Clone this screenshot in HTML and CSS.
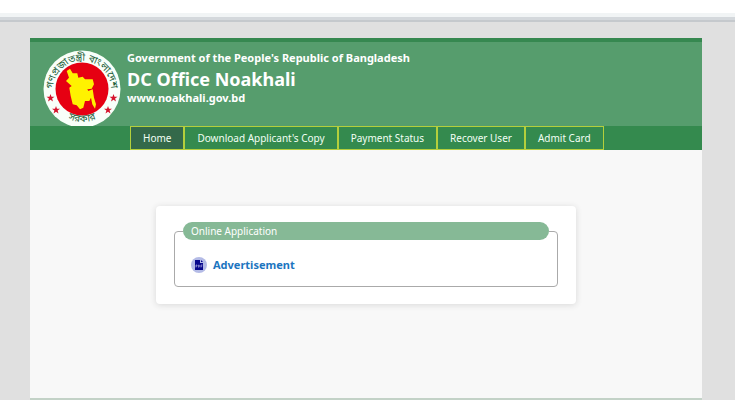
FILE: index.html
```html
<!DOCTYPE html>
<html lang="en">
<head>
<meta charset="utf-8">
<title>DC Office Noakhali</title>
<link rel="stylesheet" href="styles.css">
</head>
<body>
<div class="topbar"></div>
<div class="page">
  <header class="header">
    <svg class="seal" viewBox="0 0 78 78" aria-hidden="true">
      <defs>
        <path id="arc-top" d="M11.500 49A29 29 0 1 1 66.500 49"/>
        <path id="arc-bottom" d="M15 62A34 34 0 0 0 63 62"/>
        <path id="star" d="M0-4L1-1.300 4-1.300 1.600.6 2.500 3.500 0 1.800-2.500 3.500-1.600.6-4-1.300-1-1.300z"/>
      </defs>
      <circle cx="39" cy="39" r="38.500" fill="#f8fff9"/>
      <circle cx="39" cy="39" r="26.500" fill="#e60012"/>
      <path fill="#fff200" d="M23.700 21L27 18.700 29.700 23.300 34.300 23.300 35.300 27.700 39.700 26.700 42 29.300 49.700 29.300 51 34.300 48.700 38.700 44.300 39.300 45.300 41 49.700 39.300 51 47.700 53 54.300 52 58.700 49.300 54.300 48 47.700 46.300 51 42 51 40.300 57.700 37 59.300 33.700 55.300 29.700 54.300 27.700 46 26.300 37.700 28.700 36 23 31 26 27.700z"/>
      <g fill="#d5142c">
        <use href="#star" x="7.500" y="48"/>
        <use href="#star" x="13" y="60"/>
        <use href="#star" x="70.500" y="48"/>
        <use href="#star" x="65" y="60"/>
      </g>
      <text class="seal-text"><textPath href="#arc-top" startOffset="50%" text-anchor="middle">গণপ্রজাতন্ত্রী বাংলাদেশ</textPath></text>
      <text class="seal-text"><textPath href="#arc-bottom" startOffset="50%" text-anchor="middle">সরকার</textPath></text>
    </svg>
    <div class="titles">
      <p class="line">Government of the People's Republic of Bangladesh</p>
      <h1 class="office">DC Office Noakhali</h1>
      <p class="line">www.noakhali.gov.bd</p>
    </div>
  </header>
  <nav class="nav">
    <a class="tab active" href="#">Home</a>
    <a class="tab" href="#">Download Applicant's Copy</a>
    <a class="tab" href="#">Payment Status</a>
    <a class="tab" href="#">Recover User</a>
    <a class="tab" href="#">Admit Card</a>
  </nav>
  <main class="content">
    <section class="card">
      <fieldset class="group">
        <legend class="legend">Online Application</legend>
        <a class="advert" href="#">
          <svg class="pdf" viewBox="0 0 16 16" aria-hidden="true">
            <circle cx="8" cy="8" r="8" fill="#b4bbe6"/>
            <path fill="#08088c" d="M4 3h5v3h3v7H4z"/>
            <path fill="#08088c" d="M10 3l2 2h-2z"/>
            <path fill="none" stroke="#a9a9e0" stroke-width=".7" d="M5 10.500V8h1v1.200H5M7.500 8v2.200h.6l.5-.5V8.400L8.100 8zM10 10.500V8h1.500M10 9.200h1.200"/>
          </svg>
          <span>Advertisement</span>
        </a>
      </fieldset>
    </section>
  </main>
</div>
</body>
</html>
```
FILE: styles.css
```css
* { box-sizing: border-box; }
html, body { height: 100%; }
body {
  margin: 0;
  display: flex;
  flex-direction: column;
  background: #e0e0e0;
  font-family: "Noto Sans", sans-serif;
}
p, h1 { margin: 0; }
a { text-decoration: none; }
.topbar {
  height: 22px;
  flex: none;
  border-bottom: 2px solid #c5c9cd;
  background: linear-gradient(#fff 13px, #f1f4f5 13px, #f1f4f5 17px, #d4d8dc 17px);
}
.page {
  flex: 1;
  display: flex;
  flex-direction: column;
  margin: 16px 33px 0 30px;
  background: #f8f8f8;
  border-bottom: 2px solid #c3d2c7;
}
.header {
  display: flex;
  flex: none;
  height: 88px;
  overflow: hidden;
  padding: 0 13px;
  border-top: 4px solid #368850;
  background: #569d6d;
  color: #fff;
}
.seal {
  flex: none;
  width: 78px;
  height: 78px;
  margin-top: 8px;
}
.seal-text {
  font: 10px "Noto Sans Bengali", "Noto Sans", sans-serif;
  fill: #23603a;
}
.titles { padding: 9px 0 0 6px; }
.line {
  font-size: 11px;
  line-height: 14px;
  font-weight: 700;
}
.office {
  font-size: 18px;
  line-height: 24px;
  margin-top: 2px;
}
.nav {
  display: flex;
  flex: none;
  height: 24px;
  padding-left: 100px;
  background: #348a4e;
}
.tab {
  padding: 0 12px;
  border: 1px solid #b4cf3c;
  color: #f2fff4;
  font-size: 10px;
  line-height: 22px;
}
.active { background: #34694a; }
.content { padding: 56px 126px; }
.card {
  padding: 16px 18px 17px;
  border-radius: 4px;
  background: #fff;
  box-shadow: 0 1px 6px #d8d8d8;
}
.group {
  min-width: 0;
  margin: 0;
  padding: 0 8px 13px;
  border: 1px solid #aaa;
  border-radius: 4px;
}
.legend {
  width: 100%;
  padding: 0 8px;
  border-radius: 9px;
  background: #86b996;
  color: #fff;
  font-size: 10px;
  line-height: 18px;
}
.advert {
  display: flex;
  align-items: center;
  gap: 6px;
  margin: 17px 0 0 8px;
  color: #1c75bf;
  font-size: 11px;
  line-height: 16px;
  font-weight: 700;
}
.pdf { width: 16px; height: 16px; }
```
